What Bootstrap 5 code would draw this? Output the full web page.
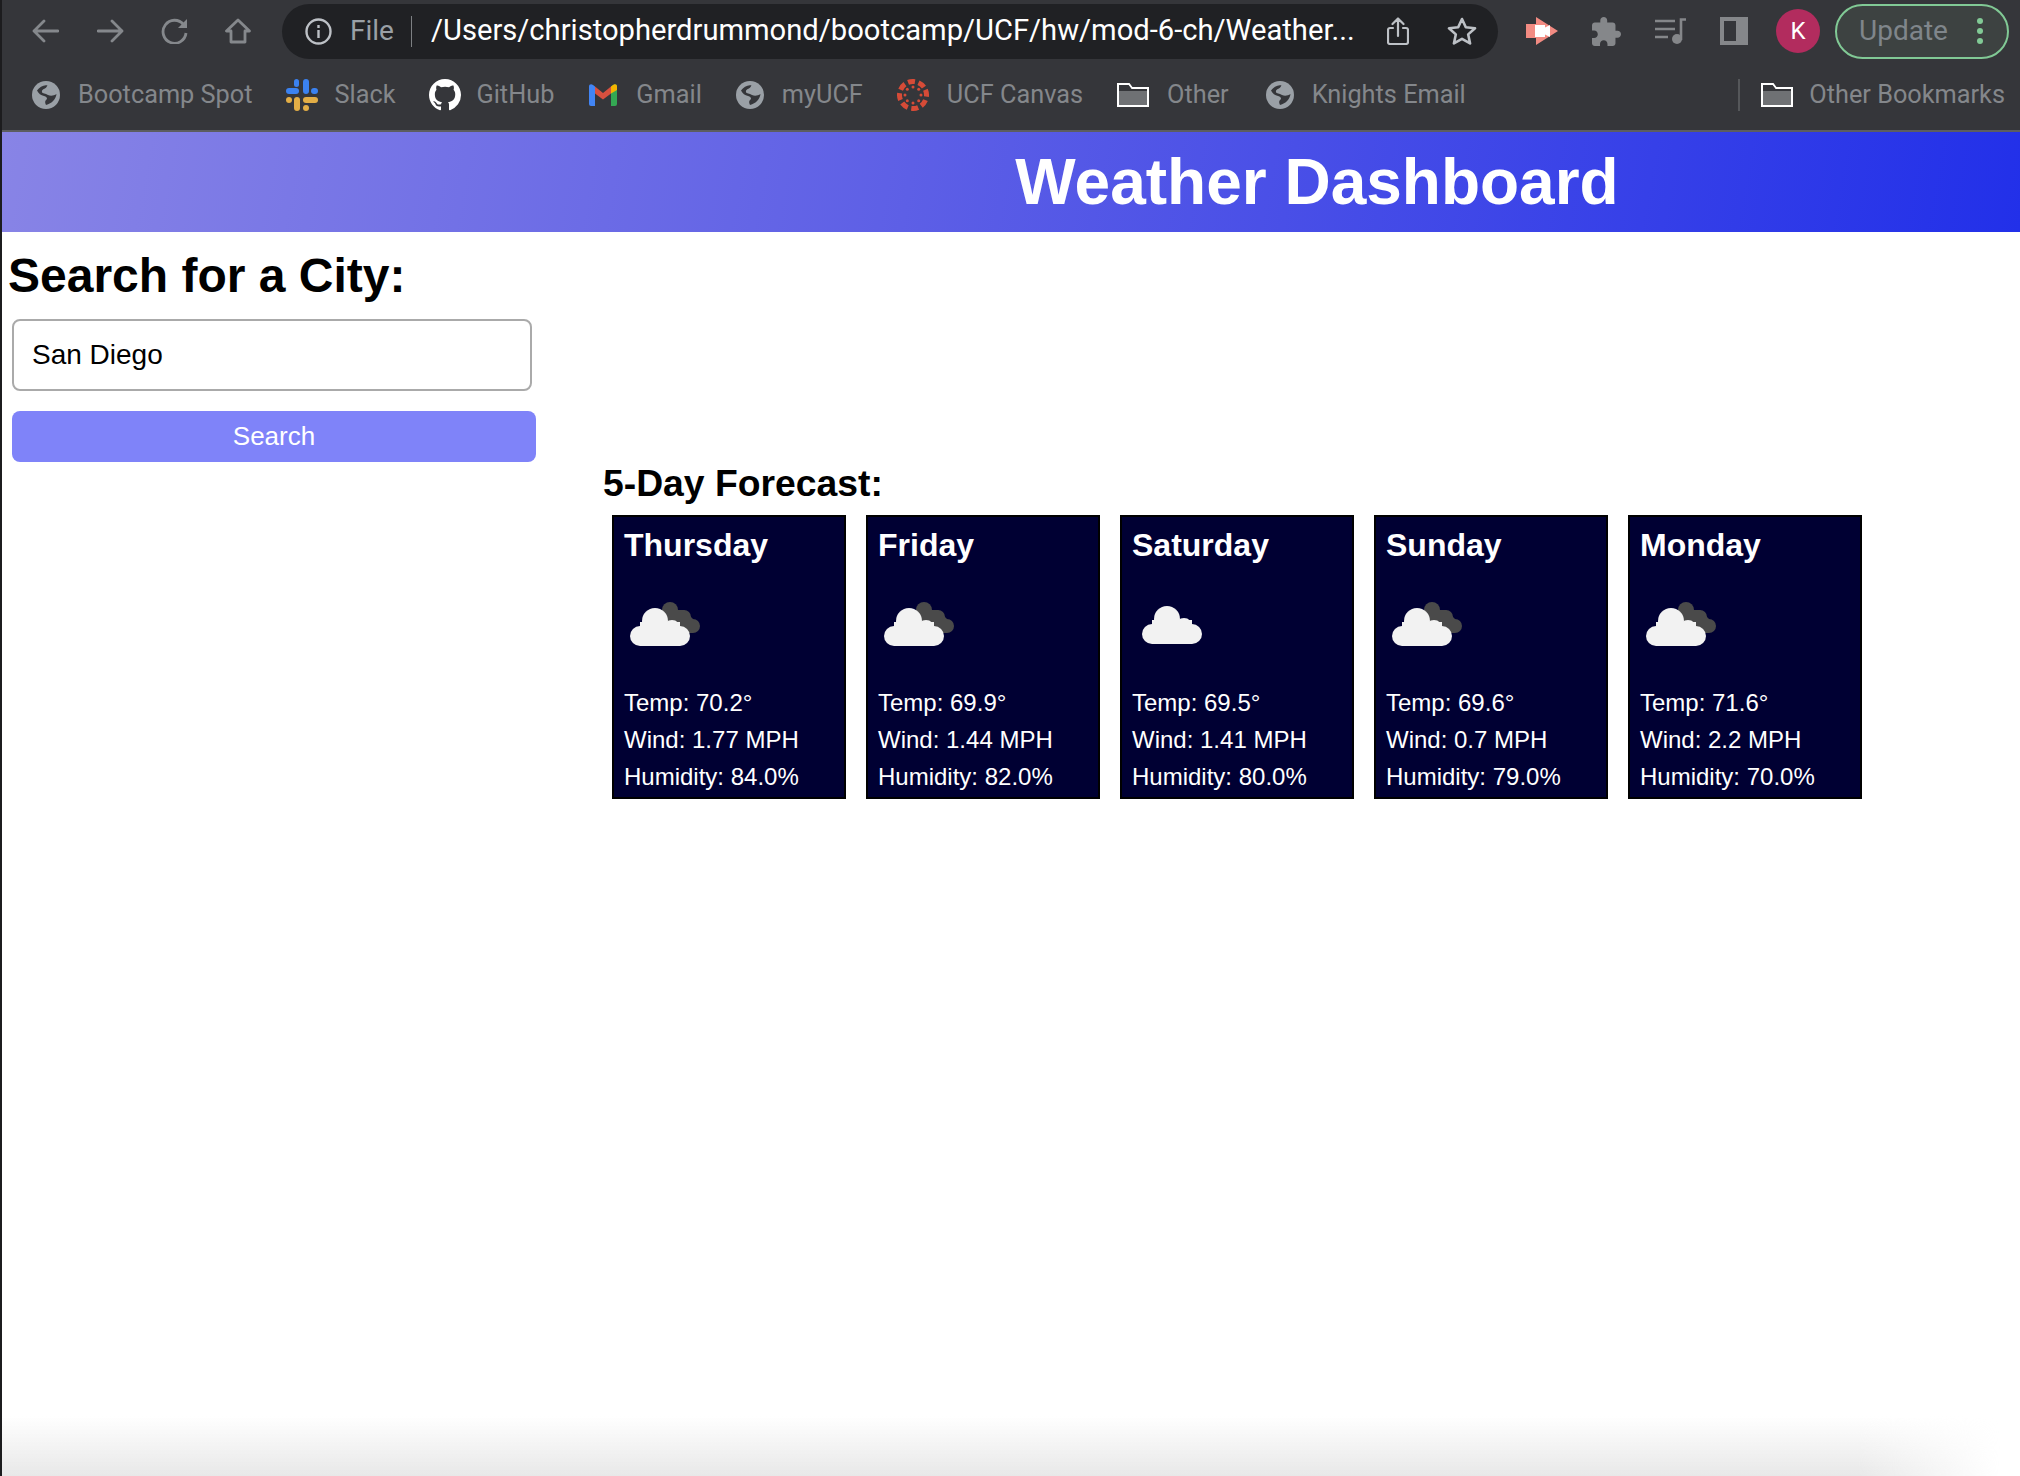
<!doctype html>
<html lang="en">
<head>
  <meta charset="utf-8">
  <meta name="viewport" content="width=device-width, initial-scale=1">
  <title>Weather Dashboard</title>
  <link href="https://cdn.jsdelivr.net/npm/bootstrap@5.3.0/dist/css/bootstrap.min.css" rel="stylesheet">
  <style>
    html, body { height: 100%; }
    body { font-family: "Liberation Sans", Arial, sans-serif; background: #fff; color: #000; overflow: hidden; }
    .app-frame { min-height: 1476px; border-left: 2px solid #1c1c1e; position: relative; }

    /* browser chrome */
    .chrome-bar { background: #35363a; height: 132px; border-bottom: 2px solid #5c5d60; font-family: Roboto, sans-serif; }
    .tool-row { height: 60px; padding-top: 2px; padding-left: 30px; }
    .tool-row svg { flex: none; }
    .addr-pill { width: 1216px; height: 55px; background: #202124; border-radius: 28px; padding: 0 21px 0 23px; margin-left: 31px; color: #fff; }
    .addr-file { color: #9aa0a6; font-size: 28px; margin: 0 17px 0 18px; }
    .addr-sep { width: 1px; height: 31px; background: #7d8083; margin-right: 19px; }
    .addr-url { font-size: 29.17px; white-space: nowrap; flex: 1 1 auto; overflow: hidden; }
    .avatar-dot { width: 44px; height: 44px; border-radius: 50%; background: #b22c5e; color: #fff; font-size: 24px; margin-left: 28px; }
    .update-pill { width: 174px; height: 55px; border: 2px solid #81c995; border-radius: 28px; background: #3d4241; color: #80868b; font-size: 28px; margin-left: 15px; padding: 0 24px 0 22px; }
    .gap-a { margin-left: 37px; }
    .gap-a1 { margin-left: 38px; }
    .gap-b { margin-left: 34px; }
    .gap-b1 { margin-left: 33px; }
    .gap-c { margin-left: 28px; }

    .mark-row { height: 70px; padding-left: 30px; color: #84878b; font-size: 25.3px; white-space: nowrap; }
    .mark-item { margin-right: 34px; gap: 18px; }
    .mark-slack { gap: 16px; }
    .mark-github { gap: 15px; margin-right: 35px; }
    .mark-gmail { gap: 19px; }
    .mark-other { margin-right: 37px; }
    .mark-end { margin-left: auto; padding-right: 15px; }
    .mark-sep { width: 2px; height: 32px; background: #55575a; margin-right: 21px; }

    /* page */
    .title-band { height: 100px; padding-left: 612px; background: linear-gradient(100deg, #8884e6, #5d5fe6 45%, #2230e9); }
    .title-band h1 { font-size: 64px; font-weight: 700; color: #fff; margin: 0; }
    .side-col { width: 601px; padding: 15px 0 0 6px; flex: none; }
    .side-col h2 { font-size: 48px; font-weight: 700; line-height: 1.2; margin: 0 0 14px; }
    .city-input.form-control { width: 520px; height: 72px; margin-left: 4px; padding: 0 18px; border: 2px solid #aaa; border-radius: 8px; font-size: 28px; color: #000; }
    .search-btn.btn { display: block; width: 524px; height: 51px; margin: 20px 0 0 4px; padding: 0; border: 0; border-radius: 8px; background: #7f83f9; color: #fff; font-size: 26px; }
    .main-col { padding-top: 229px; }
    .main-col h3 { font-size: 37.3px; font-weight: 700; line-height: 1.2; margin: 0 0 9px; }
    .day-row { margin-left: 9px; gap: 20px; }
    .day-box.card { width: 234px; height: 284px; padding: 9px 0 0 10px; background: #000033; border: 2px solid #000; border-radius: 0; color: #fff; }
    .day-box h4 { font-size: 32px; font-weight: 700; line-height: 1.2; margin: 0; }
    .day-box svg { display: block; margin: 38px 0 38px 5px; filter: blur(.6px); }
    .day-box p { font-size: 24px; line-height: 37px; margin: 0; }
    .bottom-shade { position: absolute; left: 0; right: 0; bottom: 0; height: 60px; background: linear-gradient(to bottom, rgba(232,232,232,0), #e8e8e8); -webkit-mask-image: linear-gradient(to right, #000 92%, transparent 99%); mask-image: linear-gradient(to right, #000 92%, transparent 99%); }
  </style>
</head>
<body>
  <svg width="0" height="0" class="position-absolute">
    <defs>
      <symbol id="front-cloud" viewBox="0 0 60 38">
        <g fill="#f2f2f2">
          <circle cx="25" cy="13" r="13"/><circle cx="42" cy="20.500" r="8.500"/><circle cx="10" cy="28" r="10"/><circle cx="50" cy="28" r="10"/>
          <rect x="10" y="14" width="40" height="24"/>
        </g>
      </symbol>
      <symbol id="globe" viewBox="0 0 28 28">
        <circle cx="14" cy="14" r="14" fill="#9aa0a6"/>
        <path d="M5 9.500C7.500 6 12 3.500 15.500 4.500L14 6.800C12 8 9.500 9 10 11c.5 2 3.500 1.200 6 3 3 1.500 6 .5 8.500-1C24 18 20 22.500 14 24c-1-2-1.500-4 .5-5.500C16 17 14 15.500 12 15c-3-.5-5.500-2.500-7-5.500z" fill="#35363a"/>
      </symbol>
      <symbol id="folder" viewBox="0 0 32 24">
        <path d="M1 1h11l3 4h16v18H1z" fill="#6f7174" stroke="#fff" stroke-width="2"/>
        <path d="M2 2h9.500l3 4H30v2H2z" fill="#35363a"/>
      </symbol>
    </defs>
  </svg>

  <div class="app-frame">
    <div class="chrome-bar">
      <div class="tool-row d-flex align-items-center">
        <svg width="27" height="24" viewBox="0 0 27 24" fill="none" stroke="#85888c" stroke-width="2.800" stroke-linecap="round" stroke-linejoin="round"><path d="M26 12H2M12 2 2 12l10 10"/></svg>
        <svg class="gap-a1" width="27" height="24" viewBox="0 0 27 24" fill="none" stroke="#85888c" stroke-width="2.800" stroke-linecap="round" stroke-linejoin="round"><path d="M1 12h24M15 2l10 10-10 10"/></svg>
        <svg class="gap-a" width="27" height="26" viewBox="0 0 27 26" fill="none" stroke="#85888c" stroke-width="2.800"><path d="M22.500 6.500A11.500 11.500 0 1 0 25 15"/><path d="M26 1v9h-9z" fill="#85888c" stroke="none"/></svg>
        <svg class="gap-a" width="26" height="26" viewBox="0 0 26 26" fill="none" stroke="#85888c" stroke-width="2.800" stroke-linejoin="round"><path d="M13 2 1.500 13H6v11h14V13h4.500z"/></svg>
        <div class="addr-pill d-flex align-items-center">
          <svg width="27" height="27" viewBox="0 0 27 27" fill="none" stroke="#bdc1c6" stroke-width="2.400"><circle cx="13.500" cy="13.500" r="12"/><path d="M13.500 12v8M13.500 7v3"/></svg>
          <span class="addr-file">File</span>
          <span class="addr-sep"></span>
          <span class="addr-url">/Users/christopherdrummond/bootcamp/UCF/hw/mod-6-ch/Weather...</span>
          <svg width="22" height="28" viewBox="0 0 22 28" fill="none" stroke="#bdc1c6" stroke-width="2.200" stroke-linecap="round" stroke-linejoin="round"><path d="M6 11H3a2 2 0 0 0-2 2v12a2 2 0 0 0 2 2h16a2 2 0 0 0 2-2V13a2 2 0 0 0-2-2h-3M11 19V1.500M5.500 7 11 1.500 16.500 7"/></svg>
          <svg style="margin-left:38px" width="30" height="28" viewBox="0 0 30 28" fill="none" stroke="#bdc1c6" stroke-width="2.600" stroke-linejoin="round"><path d="m15 2 3.800 8.300 9.200 1-6.800 6.100 1.900 9L15 21.800 6.900 26.400l1.900-9L2 11.300l9.200-1z"/></svg>
        </div>
        <svg class="gap-c" width="32" height="28" viewBox="0 0 32 28"><path d="M10 0 32 14 10 28v-7H0V7h10z" fill="#f28b82"/><path d="M9 8h10v2.500l5-2.500v12l-5-2.500V20H9z" fill="#fff"/></svg>
        <svg class="gap-b" width="29" height="29" viewBox="2 1 21 21" fill="#85878a"><path d="M20.500 11H19V7c0-1.100-.9-2-2-2h-4V3.500C13 2.120 11.880 1 10.500 1S8 2.120 8 3.500V5H4c-1.100 0-1.990.9-1.990 2v3.800H3.500c1.490 0 2.700 1.210 2.700 2.700s-1.210 2.700-2.700 2.700H2V20c0 1.100.9 2 2 2h3.800v-1.500c0-1.490 1.210-2.700 2.700-2.700 1.490 0 2.700 1.210 2.700 2.700V22H17c1.100 0 2-.9 2-2v-4h1.500c1.380 0 2.500-1.120 2.500-2.500S21.880 11 20.500 11z"/></svg>
        <svg class="gap-b" width="32" height="26" viewBox="0 0 32 26" fill="none" stroke="#85878a" stroke-width="2.600"><path d="M0 3h20M0 11h20M0 19h13M26 22V1.500h5"/><circle cx="22" cy="21" r="5" fill="#85878a" stroke="none"/></svg>
        <svg class="gap-b1" width="28" height="28" viewBox="0 0 28 28"><rect width="28" height="28" fill="#85878a"/><rect x="4" y="4" width="12" height="20" fill="#35363a"/></svg>
        <div class="avatar-dot d-flex align-items-center justify-content-center">K</div>
        <div class="update-pill d-flex align-items-center justify-content-between">
          <span>Update</span>
          <svg width="6" height="26" viewBox="0 0 6 26" fill="#81c995"><circle cx="3" cy="3" r="3"/><circle cx="3" cy="13" r="3"/><circle cx="3" cy="23" r="3"/></svg>
        </div>
      </div>

      <div class="mark-row d-flex align-items-center">
        <div class="mark-item d-flex align-items-center"><svg width="28" height="28"><use href="#globe"/></svg>Bootcamp Spot</div>
        <div class="mark-item mark-slack d-flex align-items-center">
          <svg width="32" height="32" viewBox="0 0 32 32">
            <rect x="0" y="9" width="13" height="6" rx="3" fill="#3b82f0"/><rect x="8" y="0" width="5" height="8" rx="2.500" fill="#3b82f0"/>
            <rect x="17" y="0" width="6" height="15" rx="3" fill="#3b82f0"/><rect x="25" y="9" width="7" height="6" rx="3" fill="#3b82f0"/>
            <rect x="17" y="18" width="15" height="6" rx="3" fill="#e3ae46"/><rect x="17" y="26" width="6" height="6" rx="3" fill="#e3ae46"/>
            <rect x="8" y="18" width="6" height="14" rx="3" fill="#e3ae46"/><rect x="0" y="18" width="6" height="6" rx="3" fill="#e3ae46"/>
          </svg>Slack</div>
        <div class="mark-item mark-github d-flex align-items-center"><svg width="32" height="32" viewBox="0 0 16 16" fill="#fff"><path d="M8 0C3.580 0 0 3.580 0 8c0 3.540 2.290 6.530 5.470 7.590.4.070.55-.17.55-.38 0-.19-.01-.82-.01-1.490-2.010.37-2.530-.49-2.690-.94-.09-.23-.48-.94-.82-1.130-.28-.15-.68-.52-.01-.53.63-.01 1.080.58 1.230.82.72 1.210 1.870.87 2.330.66.070-.52.28-.87.51-1.070-1.780-.2-3.640-.89-3.640-3.950 0-.87.31-1.590.82-2.150-.08-.2-.36-1.020.08-2.120 0 0 .67-.21 2.200.82.64-.18 1.320-.27 2-.27.68 0 1.360.09 2 .27 1.530-1.040 2.200-.82 2.200-.82.44 1.100.16 1.920.08 2.120.51.56.82 1.270.82 2.150 0 3.070-1.870 3.750-3.650 3.950.29.25.54.73.54 1.480 0 1.070-.01 1.930-.01 2.200 0 .21.15.46.55.38A8.013 8.013 0 0 0 16 8c0-4.420-3.580-8-8-8z"/></svg>GitHub</div>
        <div class="mark-item mark-gmail d-flex align-items-center">
          <svg width="28" height="22" viewBox="0 0 28 22">
            <path d="M0 2.500C0 .5 2 -.5 4 1l2 1.500V22H2a2 2 0 0 1-2-2z" fill="#4285f4"/>
            <path d="M28 2.500C28 .5 26-.5 24 1l-2 1.500V22h4a2 2 0 0 0 2-2z" fill="#34a853"/>
            <path d="M6 2.500 14 9l8-6.500v7L14 15.500 6 9.500z" fill="#d8503f"/>
            <path d="M22 2.500 24 1c2-1.500 4-.5 4 1.500V6l-6 3.500z" fill="#f4b400"/>
          </svg>Gmail</div>
        <div class="mark-item d-flex align-items-center"><svg width="28" height="28"><use href="#globe"/></svg>myUCF</div>
        <div class="mark-item d-flex align-items-center">
          <svg width="32" height="32" viewBox="0 0 32 32" fill="#d64b37">
            <circle cx="16" cy="16" r="13.500" fill="none" stroke="#d64b37" stroke-width="5" stroke-dasharray="7 3.600" transform="rotate(-23 16 16)"/>
            <circle cx="16" cy="8" r="1.500"/><circle cx="16" cy="24" r="1.500"/><circle cx="8" cy="16" r="1.500"/><circle cx="24" cy="16" r="1.500"/>
            <circle cx="10.300" cy="10.300" r="1.500"/><circle cx="21.700" cy="10.300" r="1.500"/><circle cx="10.300" cy="21.700" r="1.500"/><circle cx="21.700" cy="21.700" r="1.500"/>
          </svg>UCF Canvas</div>
        <div class="mark-item mark-other d-flex align-items-center"><svg width="32" height="24"><use href="#folder"/></svg>Other</div>
        <div class="mark-item d-flex align-items-center"><svg width="28" height="28"><use href="#globe"/></svg>Knights Email</div>
        <div class="mark-end d-flex align-items-center">
          <span class="mark-sep"></span>
          <div class="d-flex align-items-center gap-3"><svg width="32" height="24"><use href="#folder"/></svg>Other Bookmarks</div>
        </div>
      </div>
    </div>

    <header class="title-band d-flex align-items-center justify-content-center">
      <h1>Weather Dashboard</h1>
    </header>

    <div class="d-flex">
      <aside class="side-col">
        <h2>Search for a City:</h2>
        <input class="city-input form-control" type="text" value="San Diego">
        <button class="search-btn btn" type="button">Search</button>
      </aside>
      <main class="main-col">
        <h3>5-Day Forecast:</h3>
        <div class="day-row d-flex" id="forecast"></div>
      </main>
    </div>

    <div class="bottom-shade"></div>
  </div>

  <script>
    const days = [
      ['Thursday', '70.2', '1.77', '84.0', true],
      ['Friday', '69.9', '1.44', '82.0', true],
      ['Saturday', '69.5', '1.41', '80.0', false],
      ['Sunday', '69.6', '0.7', '79.0', true],
      ['Monday', '71.6', '2.2', '70.0', true]
    ];

    const backCloud = '<g fill="#4a4a4a"><circle cx="41" cy="8" r="8"/><circle cx="55" cy="15" r="7"/><circle cx="64" cy="24" r="7"/><path d="M34 8h21l9 9v14H34z"/></g>';

    document.getElementById('forecast').innerHTML = days.map(d => `
      <div class="day-box card">
        <h4>${d[0]}</h4>
        <svg width="72" height="44" viewBox="0 0 72 44">
          ${d[4] ? backCloud : ''}
          <use href="#front-cloud" x="${d[4] ? 1 : 5}" y="${d[4] ? 6 : 4}" width="60" height="38"/>
        </svg>
        <p>Temp: ${d[1]}°</p>
        <p>Wind: ${d[2]} MPH</p>
        <p>Humidity: ${d[3]}%</p>
      </div>`).join('');
  </script>
  <script src="https://cdn.jsdelivr.net/npm/bootstrap@5.3.0/dist/js/bootstrap.bundle.min.js"></script>
</body>
</html>
